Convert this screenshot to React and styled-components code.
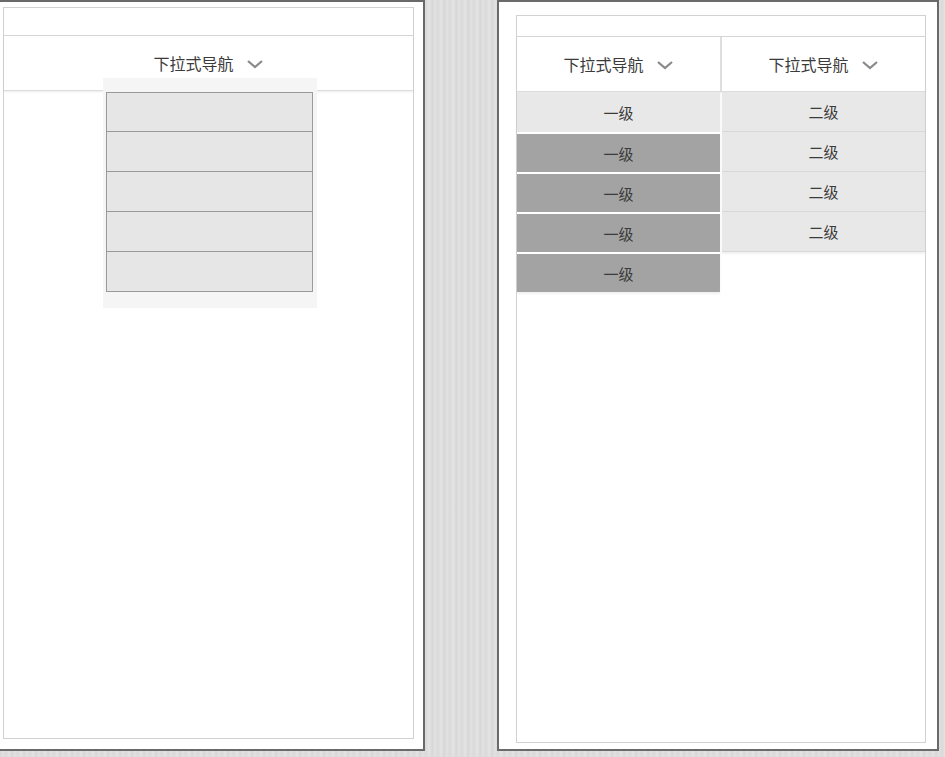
import React from "react";
import styled, { createGlobalStyle } from "styled-components";

const GlobalStyle = createGlobalStyle`
  html, body {
    margin: 0;
    padding: 0;
  }
  body {
    font-family: "Liberation Sans", "Noto Sans CJK SC", sans-serif;
    color: #333;
  }
`;

const Page = styled.div`
  width: 945px;
  height: 757px;
  overflow: hidden;
  display: flex;
  align-items: flex-start;
  gap: 72px;
  background-color: #dcdcdc;
  background-image: repeating-linear-gradient(
    90deg,
    #d6d6d6 0px,
    #e2e2e2 3px,
    #d9d9d9 6px,
    #e4e4e4 9px,
    #d8d8d8 12px
  );
`;

const Frame = styled.div`
  box-sizing: border-box;
  height: 751px;
  background: #fff;
  border: 2px solid #6a6a6a;
  border-left-width: ${(p) => (p.$cut ? 0 : 2)}px;
  width: ${(p) => p.$width}px;
  padding: ${(p) => p.$pad};
  display: flex;
`;

const Screen = styled.div`
  position: relative;
  flex: 1;
  border: 1px solid #d2d2d2;
  background: #fff;
  display: flex;
  flex-direction: column;
`;

const TopBar = styled.div`
  height: ${(p) => p.$h}px;
  border-bottom: 1px solid #d6d6d6;
`;

const NavRow = styled.div`
  display: flex;
  height: 54px;
  border-bottom: 1px solid #dcdcdc;
  box-shadow: 0 1px 2px rgba(0, 0, 0, 0.08);
`;

const NavItem = styled.div`
  flex: 1;
  display: flex;
  align-items: center;
  justify-content: center;
  gap: 12px;
  font-size: 16px;
  color: #3a3a3a;
  & + & {
    border-left: 2px solid #dedede;
  }
`;

const Chevron = () => (
  <svg width="18" height="11" viewBox="0 0 18 11">
    <path d="M2 3 L9 9 L16 3" fill="none" stroke="#8a8a8a" strokeWidth="2.3" />
  </svg>
);

const Dropdown = styled.div`
  position: absolute;
  top: 70px;
  left: 99px;
  width: 207px;
  padding: 14px 4px 16px 3px;
  background: #f5f5f5;
`;

const DropItem = styled.div`
  box-sizing: border-box;
  height: 40px;
  background: #e6e6e6;
  border: 1px solid #9a9a9a;
  & + & {
    border-top: none;
  }
`;

const Lists = styled.div`
  display: flex;
  align-items: flex-start;
`;

const List = styled.div`
  flex: 1;
  display: flex;
  flex-direction: column;
  box-shadow: 0 2px 2px rgba(0, 0, 0, 0.06);
  & + & {
    margin-left: 2px;
  }
`;

const Level = styled.div`
  box-sizing: border-box;
  height: 40px;
  display: flex;
  align-items: center;
  justify-content: center;
  font-size: 15px;
  color: #3a3a3a;
  background: ${(p) => (p.$dark ? "#a3a3a3" : "#e8e8e8")};
  border-top: ${(p) => (p.$dark ? "2px solid #fff" : "none")};
  border-bottom: ${(p) => (p.$line ? "1px solid #d8d8d8" : "none")};
`;

export default function App() {
  return (
    <>
      <GlobalStyle />
      <Page>
        <Frame $cut $width={425} $pad="5px 9px 10px 3px">
          <Screen>
            <TopBar $h={27} />
            <NavRow>
              <NavItem>
                下拉式导航
                <Chevron />
              </NavItem>
            </NavRow>
            <Dropdown>
              {[0, 1, 2, 3, 4].map((i) => (
                <DropItem key={i} />
              ))}
            </Dropdown>
          </Screen>
        </Frame>
        <Frame $width={442} $pad="13px 11px 6px 17px">
          <Screen>
            <TopBar $h={20} />
            <NavRow>
              <NavItem>
                下拉式导航
                <Chevron />
              </NavItem>
              <NavItem>
                下拉式导航
                <Chevron />
              </NavItem>
            </NavRow>
            <Lists>
              <List>
                <Level>一级</Level>
                <Level $dark>一级</Level>
                <Level $dark>一级</Level>
                <Level $dark>一级</Level>
                <Level $dark>一级</Level>
              </List>
              <List>
                <Level $line>二级</Level>
                <Level $line>二级</Level>
                <Level $line>二级</Level>
                <Level $line>二级</Level>
              </List>
            </Lists>
          </Screen>
        </Frame>
      </Page>
    </>
  );
}
